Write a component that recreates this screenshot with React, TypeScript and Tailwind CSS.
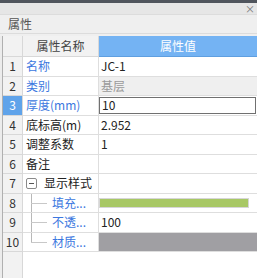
import { Fragment } from "react";

interface Row {
  name: string;
  value?: string;
  kind?: "text" | "muted" | "input" | "green" | "gray";
  blue?: boolean;
  child?: boolean;
  group?: boolean;
  last?: boolean;
}

const rows: Row[] = [
  { name: "名称", value: "JC-1", blue: true },
  { name: "类别", value: "基层", kind: "muted", blue: true },
  { name: "厚度(mm)", value: "10", kind: "input", blue: true },
  { name: "底标高(m)", value: "2.952" },
  { name: "调整系数", value: "1" },
  { name: "备注" },
  { name: "显示样式", group: true },
  { name: "填充...", kind: "green", child: true },
  { name: "不透...", value: "100", child: true },
  { name: "材质...", kind: "gray", child: true, last: true },
];

function NameCell({ row }: { row: Row }) {
  if (row.group) {
    return (
      <div className="flex items-center h-full pl-[3px]">
        <div className="relative w-[11px] h-[11px] border border-[#8a8a8a] rounded-[2px] bg-white flex items-center justify-center">
          <div className="w-[5px] h-px bg-[#555]" />
        </div>
        <span className="ml-[7px] text-[#222]">{row.name}</span>
      </div>
    );
  }
  if (row.child) {
    return (
      <div className="relative flex items-center h-full">
        <div
          className={
            "absolute left-[8px] top-0 w-px bg-[#b8b8b8] " +
            (row.last ? "h-1/2" : "h-full")
          }
        />
        <div className="absolute left-[8px] top-1/2 w-[16px] h-px bg-[#c8c8c8]" />
        <span className="ml-[29px] text-[#3c78e0]">{row.name}</span>
      </div>
    );
  }
  return (
    <div className={"flex items-center h-full pl-[3px] " + (row.blue ? "text-[#3c78e0]" : "text-[#222]")}>
      {row.name}
    </div>
  );
}

function ValueCell({ row }: { row: Row }) {
  switch (row.kind) {
    case "muted":
      return <div className="flex items-center h-full pl-[2px] bg-[#efefef] text-[#9a9a9a]">{row.value}</div>;
    case "input":
      return (
        <div className="h-full py-[1px] pr-[1px]">
          <div className="flex items-center h-full border border-[#707070] pl-[2px] text-[#222] bg-white">{row.value}</div>
        </div>
      );
    case "green":
      return (
        <div className="flex items-center h-full pr-[8px]">
          <div className="w-full h-[10px] bg-[#a8c865] border border-[#d6d6d6]" />
        </div>
      );
    case "gray":
      return <div className="h-full bg-[#a09fa3]" />;
    default:
      return <div className="flex items-center h-full pl-[2px] text-[#222]">{row.value}</div>;
  }
}

export default function App() {
  return (
    <div
      className="w-[257px] h-[278px] overflow-hidden flex flex-col bg-white text-[12px] leading-none"
      style={{ fontFamily: '"Noto Sans CJK SC", "Noto Sans", sans-serif' }}
    >
      <div className="h-[3px] bg-[#50555d]" />
      <div className="h-[11px] bg-[#e6e6e6] flex items-center justify-end pr-[2px] text-[10px] text-[#777]">×</div>
      <div className="h-[20px] bg-[#efefef] border-t border-[#dcdcdc] border-b border-[#cfcfcf] flex items-center pl-[8px] text-[#555]">
        属性
      </div>
      <div className="h-[2px] bg-[#efefef]" />
      <div className="flex-1 flex">
        <div className="w-[3px] bg-[#ececec] border-r border-[#b0b0b0]" />
        <div className="flex-1 relative">
          <div className="absolute left-0 top-0 bottom-0 w-[20px] bg-[#f2f2f2] border-r border-[#d8d8d8]" />
          <div className="relative grid grid-cols-[20px_76px_1fr]">
            <div className="h-[21px] bg-[#f2f2f2] border-r border-b border-[#d8d8d8]" />
            <div className="h-[21px] bg-[#f2f2f2] border-r border-b border-[#d8d8d8] flex items-center justify-center text-[#444]">
              属性名称
            </div>
            <div className="h-[21px] bg-[#74b3f3] border-b border-[#5f9fe0] flex items-center justify-center text-white">
              属性值
            </div>
            {rows.map((row, i) => (
              <Fragment key={i}>
                <div
                  className={
                    "h-[19.5px] border-r border-b border-[#d8d8d8] flex items-center justify-center " +
                    (i === 2 ? "bg-[#5fa3ea] text-white" : "bg-[#f2f2f2] text-[#333]")
                  }
                >
                  {i + 1}
                </div>
                <div className="h-[19.5px] border-r border-b border-[#dedede]">
                  <NameCell row={row} />
                </div>
                <div className="h-[19.5px] border-b border-[#dedede]">
                  <ValueCell row={row} />
                </div>
              </Fragment>
            ))}
          </div>
        </div>
      </div>
    </div>
  );
}
